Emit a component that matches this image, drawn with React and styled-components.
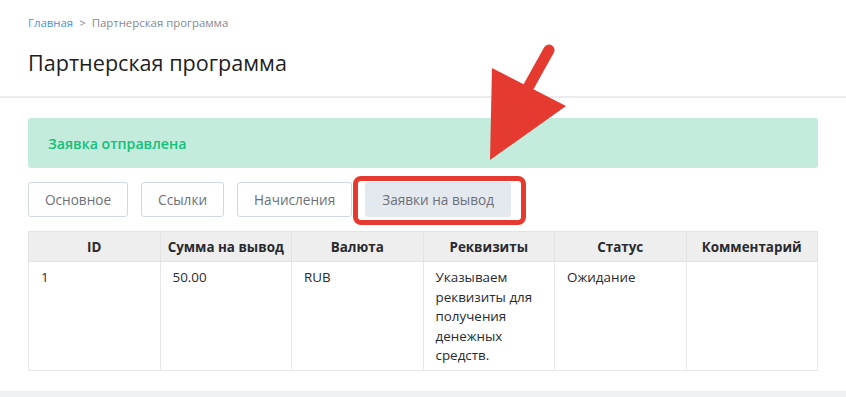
import React from "react";
import styled, { createGlobalStyle } from "styled-components";

const Global = createGlobalStyle`
  html, body { margin: 0; padding: 0; background: #eef0f4; }
  body { font-family: "Open Sans", "Noto Sans", sans-serif; }
  * { box-sizing: border-box; }
`;

const Card = styled.div`
  position: relative;
  background: #fff;
  width: 846px;
`;

const Header = styled.header`
  padding: 16px 28px 20px;
  border-bottom: 2px solid #ececee;
`;

const Crumbs = styled.nav`
  display: flex;
  gap: 6px;
  font-size: 11.4px;
  line-height: 14px;
  color: #858a93;
`;

const CrumbLink = styled.a`
  color: #4f93d6;
  text-decoration: none;
`;

const Title = styled.h1`
  margin: 20px 0 0;
  font-size: 21.6px;
  line-height: 26px;
  font-weight: 400;
  color: #1e1e22;
`;

const Content = styled.section`
  padding: 20px 28px 20px;
`;

const Alert = styled.div`
  height: 50px;
  display: flex;
  align-items: center;
  padding: 0 20px;
  background: #c4ecdc;
  border-radius: 3px;
  color: #12c07a;
  font-size: 14.2px;
  font-weight: 600;
`;

const Tabs = styled.div`
  display: flex;
  gap: 13px;
  margin-top: 14px;
`;

const TabWrap = styled.div`
  position: relative;
`;

const Tab = styled.button`
  height: 35px;
  padding: 0 16px;
  border: 1px solid ${(p) => (p.$active ? "#e4e8ef" : "#d2d8df")};
  border-radius: 3px;
  background: ${(p) => (p.$active ? "#e4e8ef" : "#fff")};
  color: #6c7179;
  font-family: inherit;
  font-size: 13.6px;
  font-weight: 500;
  cursor: pointer;
`;

const Highlight = styled.span`
  position: absolute;
  left: -12px;
  right: -15px;
  top: -6px;
  bottom: -8px;
  border: 5px solid #e53a2f;
  border-radius: 8px;
  pointer-events: none;
`;

const Table = styled.table`
  margin-top: 14px;
  width: 100%;
  border-collapse: collapse;
  table-layout: fixed;
  font-size: 13.4px;
  color: #2a2a2e;
`;

const Th = styled.th`
  height: 30px;
  padding: 0 6px;
  background: #eeeeee;
  border: 1px solid #e3e3e3;
  font-weight: 700;
  text-align: center;
  white-space: nowrap;
`;

const Td = styled.td`
  padding: 6px 12px 4px;
  border: 1px solid #e8e8e8;
  vertical-align: top;
  line-height: 19.6px;
`;

const Arrow = styled.svg`
  position: absolute;
  left: 0;
  top: 0;
  pointer-events: none;
`;

const cols = ["ID", "Сумма на вывод", "Валюта", "Реквизиты", "Статус", "Комментарий"];
const row = ["1", "50.00", "RUB", "Указываем реквизиты для получения денежных средств.", "Ожидание", ""];

export default function App() {
  return (
    <>
      <Global />
      <Card>
        <Header>
          <Crumbs>
            <CrumbLink href="#">Главная</CrumbLink>
            <span>&gt;</span>
            <span>Партнерская программа</span>
          </Crumbs>
          <Title>Партнерская программа</Title>
        </Header>
        <Content>
          <Alert>Заявка отправлена</Alert>
          <Tabs>
            <Tab>Основное</Tab>
            <Tab>Ссылки</Tab>
            <Tab>Начисления</Tab>
            <TabWrap>
              <Tab $active>Заявки на вывод</Tab>
              <Highlight />
            </TabWrap>
          </Tabs>
          <Table>
            <thead>
              <tr>
                {cols.map((c) => (
                  <Th key={c}>{c}</Th>
                ))}
              </tr>
            </thead>
            <tbody>
              <tr>
                {row.map((c, i) => (
                  <Td key={i}>{c}</Td>
                ))}
              </tr>
            </tbody>
          </Table>
        </Content>
        <Arrow width="846" height="200" viewBox="0 0 846 200">
          <line x1="549" y1="50" x2="520" y2="102" stroke="#e53a2f" strokeWidth="11" strokeLinecap="round" />
          <polygon points="492,68 566,106 490,160" fill="#e53a2f" />
        </Arrow>
      </Card>
    </>
  );
}
